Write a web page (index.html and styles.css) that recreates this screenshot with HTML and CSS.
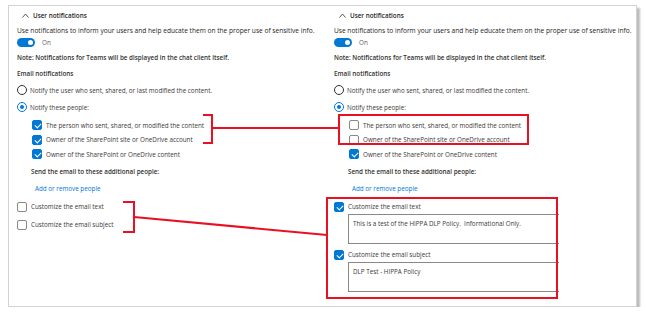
FILE: index.html
```html
<!DOCTYPE html>
<html lang="en">
  <head>
    <meta charset="UTF-8" />
    <meta name="viewport" content="width=device-width, initial-scale=1.0" />
    <title>User notifications</title>
    <link rel="stylesheet" href="styles.css">
  </head>
  <body>
    <div class="card">
      <div class="panel">
        <div class="head">
          <svg class="chev" width="7" height="5" viewBox="0 0 7 5"><polyline points="0.5,4.5 3.5,1 6.5,4.5" /></svg>
          <span>User notifications</span>
        </div>
        <div class="desc">Use notifications to inform your users and help educate them on the proper use of sensitive info.</div>
        <div class="toggle-row"><span class="toggle"></span><span class="muted">On</span></div>
        <div class="note">Note: Notifications for Teams will be displayed in the chat client itself.</div>
        <div class="subhead">Email notifications</div>
        <div class="radios">
          <div class="row"><span class="radio"></span>Notify the user who sent, shared, or last modified the content.</div>
          <div class="row"><span class="radio on"></span>Notify these people:</div>
        </div>
        <div class="checks">
          <div class="row"><span class="cb on"></span>The person who sent, shared, or modified the content</div>
          <div class="row"><span class="cb on"></span>Owner of the SharePoint site or OneDrive account</div>
          <div class="row"><span class="cb on"></span>Owner of the SharePoint or OneDrive content</div>
        </div>
        <div class="send">Send the email to these additional people:</div>
        <div class="link">Add or remove people</div>
        <div class="custom">
          <div class="row"><span class="cb"></span>Customize the email text</div>
          <div class="row"><span class="cb"></span>Customize the email subject</div>
        </div>
      </div>

      <div class="panel">
        <div class="head">
          <svg class="chev" width="7" height="5" viewBox="0 0 7 5"><polyline points="0.5,4.5 3.5,1 6.5,4.5" /></svg>
          <span>User notifications</span>
        </div>
        <div class="desc">Use notifications to inform your users and help educate them on the proper use of sensitive info.</div>
        <div class="toggle-row"><span class="toggle"></span><span class="muted">On</span></div>
        <div class="note">Note: Notifications for Teams will be displayed in the chat client itself.</div>
        <div class="subhead">Email notifications</div>
        <div class="radios">
          <div class="row"><span class="radio"></span>Notify the user who sent, shared, or last modified the content.</div>
          <div class="row"><span class="radio on"></span>Notify these people:</div>
        </div>
        <div class="checks">
          <div class="row"><span class="cb"></span>The person who sent, shared, or modified the content</div>
          <div class="row"><span class="cb"></span>Owner of the SharePoint site or OneDrive account</div>
          <div class="row"><span class="cb on"></span>Owner of the SharePoint or OneDrive content</div>
        </div>
        <div class="send">Send the email to these additional people:</div>
        <div class="link">Add or remove people</div>
        <div class="custom">
          <div class="row"><span class="cb on"></span>Customize the email text</div>
          <div class="textbox">This is a test of the HIPPA DLP Policy.&nbsp; Informational Only.</div>
          <div class="row"><span class="cb on"></span>Customize the email subject</div>
          <div class="textbox">DLP Test - HIPPA Policy</div>
        </div>
      </div>
    </div>

    <svg class="marks" width="646" height="313" viewBox="0 0 646 313">
      <path d="M203 115 H212 V143 H203" />
      <path d="M212 128 H339" />
      <rect x="339" y="115" width="189" height="29" />
      <path d="M123 202 H134 V232 H123" />
      <path d="M134 217 L327 235" />
      <rect x="327" y="198" width="230" height="100" />
    </svg>
  </body>
</html>
```

FILE: styles.css
```css
* {
  margin: 0;
  padding: 0;
  box-sizing: border-box;
}
body {
  background-color: white;
  font-family: "Open Sans", "Noto Sans", sans-serif;
  font-size: 6.3px;
  color: #252423;
}
.card {
  width: 629px;
  height: 302px;
  margin: 5px 0 0 8px;
  border: 1px solid #d2d2d2;
  box-shadow: 3px 3px 2px #bdbdbd;
  display: grid;
  grid-template-columns: 317px 1fr;
}
.panel {
  padding: 2px 0 0 8px;
}
.head {
  height: 14px;
  display: flex;
  align-items: center;
  font-weight: 600;
  padding-left: 5px;
}
.chev {
  margin-right: 4px;
}
.chev polyline {
  fill: none;
  stroke: #323130;
  stroke-width: 0.8;
}
.desc {
  height: 14px;
  margin-top: 1px;
  display: flex;
  align-items: center;
  font-size: 6.6px;
}
.toggle-row {
  height: 10px;
  display: flex;
  align-items: center;
}
.toggle {
  width: 18px;
  height: 9px;
  border-radius: 5px;
  background-color: #0078d4;
  position: relative;
  margin-right: 7px;
}
.toggle::after {
  content: "";
  position: absolute;
  right: 2px;
  top: 2px;
  width: 5px;
  height: 5px;
  border-radius: 50%;
  background-color: white;
}
.muted {
  color: #605e5c;
}
.note,
.subhead,
.send {
  height: 14px;
  display: flex;
  align-items: center;
  font-weight: 600;
  color: #323130;
}
.note {
  margin-top: 3px;
}
.subhead {
  margin-top: 2px;
}
.row {
  height: 14px;
  display: flex;
  align-items: center;
  color: #3b3a39;
}
.radios {
  margin-top: 3px;
  display: flex;
  flex-direction: column;
  gap: 3px;
}
.radio {
  width: 10px;
  height: 10px;
  border: 1px solid #323130;
  border-radius: 50%;
  margin-right: 3px;
  position: relative;
}
.radio.on {
  border-color: #0078d4;
}
.radio.on::after {
  content: "";
  position: absolute;
  left: 2px;
  top: 2px;
  width: 4px;
  height: 4px;
  border-radius: 50%;
  background-color: #0078d4;
}
.checks {
  margin-top: 4px;
  padding-left: 15px;
}
.checks .row {
  height: 14.5px;
}
.cb {
  width: 10px;
  height: 10px;
  border: 1px solid #8a8886;
  border-radius: 2px;
  margin-right: 4px;
  position: relative;
}
.cb.on {
  background-color: #0078d4;
  border-color: #0078d4;
}
.cb.on::after {
  content: "";
  position: absolute;
  left: 2.5px;
  top: 1.2px;
  width: 3px;
  height: 5px;
  border-right: 1px solid white;
  border-bottom: 1px solid white;
  transform: rotate(45deg);
}
.send {
  margin-top: 3px;
  padding-left: 14px;
}
.link {
  height: 14px;
  margin-top: 3px;
  padding-left: 18px;
  display: flex;
  align-items: center;
  color: #0078d4;
}
.custom {
  margin-top: 4px;
  display: flex;
  flex-direction: column;
  gap: 4px;
}
.custom .textbox {
  margin: -4px 0 0 14px;
  width: 211px;
  height: 30px;
  border: 1px solid #8a8886;
  border-right: none;
  padding: 4px 4px;
  color: #3b3a39;
}
.marks {
  position: absolute;
  left: 0;
  top: 0;
  pointer-events: none;
}
.marks path,
.marks rect {
  fill: none;
  stroke: #e81123;
  stroke-width: 2;
}
```
